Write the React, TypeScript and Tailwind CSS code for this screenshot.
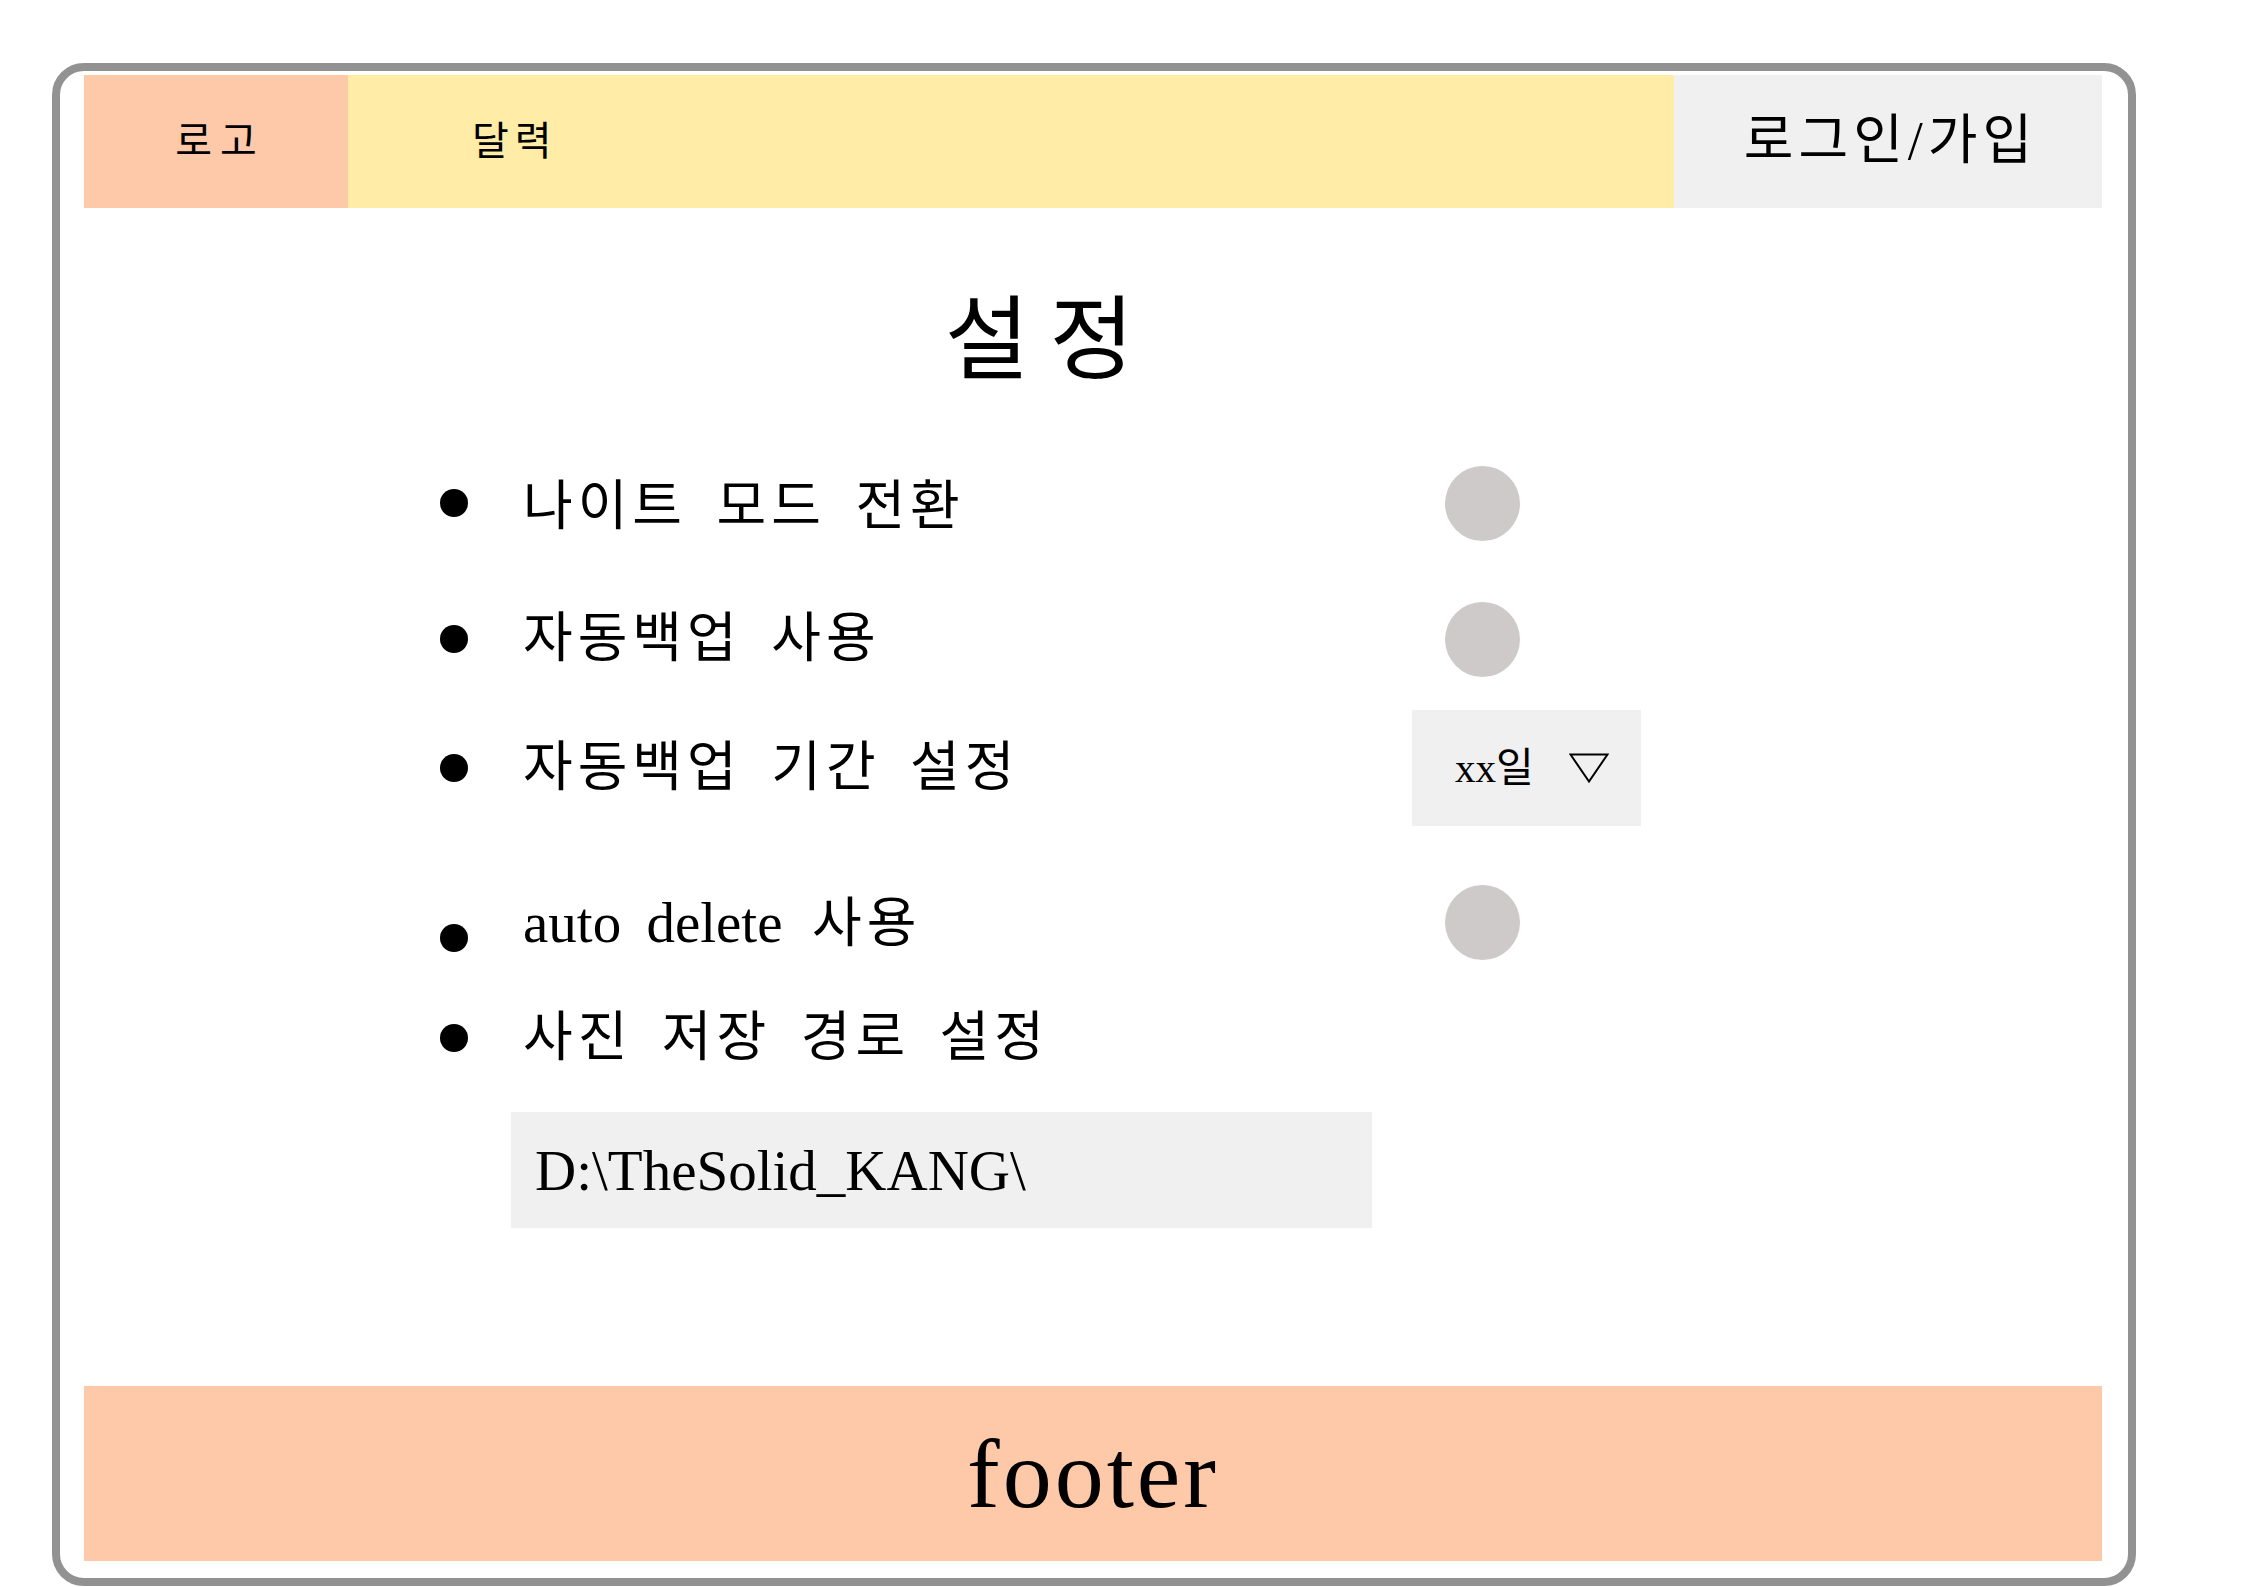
import React from 'react';

const FONT = "font-['Liberation_Serif','Noto_Sans_CJK_KR',serif]";

type RowProps = {
  label: React.ReactNode;
  control?: React.ReactNode;
  className?: string;
  bulletClass?: string;
};

const Toggle = () => <div className="ml-[33px] h-[75px] w-[75px] rounded-full bg-[#cecaca]" />;

const Dropdown = () => (
  <div className="flex h-[116px] w-[229px] items-center bg-[#f0f0f0] pl-[43px]">
    <span className="text-[41px] leading-none">xx일</span>
    <svg className="ml-[35px]" width="40" height="30" viewBox="0 0 40 30">
      <polygon points="1.5,1.5 38.5,1.5 20,28.5" fill="none" stroke="#000" strokeWidth="2" />
    </svg>
  </div>
);

const Row = ({ label, control, className = 'h-[80px]', bulletClass = '' }: RowProps) => (
  <div className={`flex items-center ${className}`}>
    <div className={`h-[28px] w-[28px] shrink-0 rounded-full bg-black ${bulletClass}`} />
    <div className="ml-[55px] w-[889px] text-[54px] leading-none tracking-[5px] [word-spacing:11px]">{label}</div>
    {control}
  </div>
);

export default function App() {
  return (
    <div className={`min-h-screen bg-white pl-[52px] pt-[63px] text-black ${FONT}`}>
      <div className="flex h-[1523px] w-[2084px] flex-col rounded-[32px] border-8 border-[#929292] pb-[17px] pl-[24px] pr-[26px] pt-[4px]">
        {/* header */}
        <header className="flex h-[133px] shrink-0">
          <div className="flex w-[264px] items-center justify-center bg-[#fec9a8] pl-[8px] text-[40px] tracking-[8px]">로고</div>
          <div className="flex flex-1 items-center bg-[#feeca7] pl-[124px] text-[40px] tracking-[6px]">달력</div>
          <div className="flex w-[428px] items-center justify-center bg-[#f0f0f0] pl-[5px] text-[54px] tracking-[5px]">로그인/가입</div>
        </header>

        {/* settings */}
        <main className="flex-1">
          <h1 className="mt-[87px] pr-[87px] text-center text-[92px] font-normal leading-none tracking-[20px]">설정</h1>

          <div className="pl-[356px]">
            <Row className="mt-[76px] h-[80px]" label={<span className="relative top-[4px]">나이트 모드 전환</span>} control={<Toggle />} />
            <Row className="mt-[56px] h-[80px]" label="자동백업 사용" control={<Toggle />} />
            <Row className="mt-[31px] h-[116px]" label="자동백업 기간 설정" control={<Dropdown />} />
            <Row
              className="mt-[56px] h-[80px]"
              bulletClass="mt-[32px]"
              label={
                <>
                  <span className="text-[57px] tracking-normal">auto delete</span> 사용
                </>
              }
              control={<Toggle />}
            />
            <Row className="mt-[36px] h-[80px]" label="사진 저장 경로 설정" />
          </div>

          <div className="ml-[427px] mt-[34px] flex h-[116px] w-[861px] items-center bg-[#f0f0f0] pl-[24px] text-[57px] leading-none">
            D:\TheSolid_KANG\
          </div>
        </main>

        {/* footer */}
        <footer className="flex h-[175px] shrink-0 items-center justify-center bg-[#fec9a8] text-[98px] leading-none tracking-[3px]">
          footer
        </footer>
      </div>
    </div>
  );
}
